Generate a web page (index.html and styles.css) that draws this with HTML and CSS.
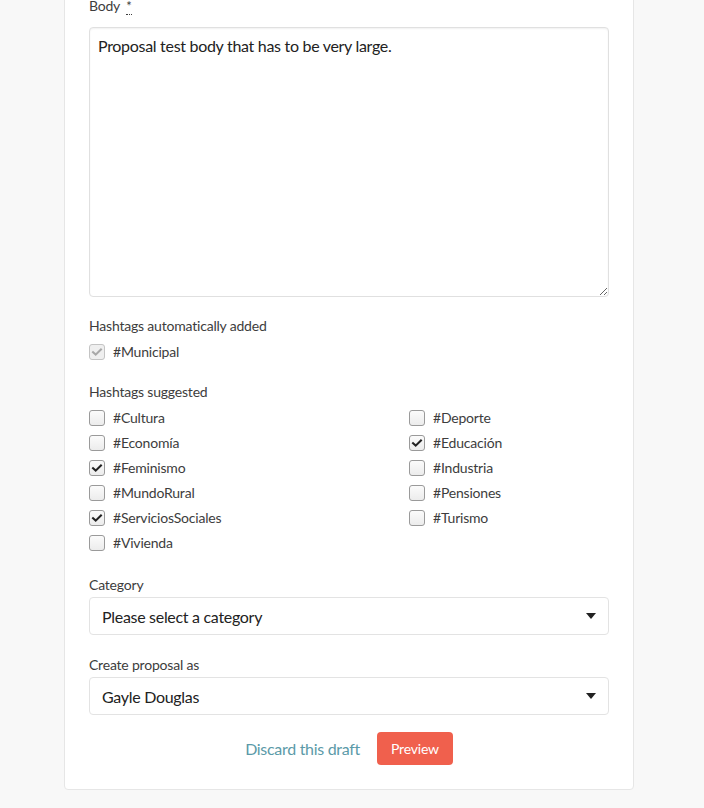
FILE: index.html
```html
<!DOCTYPE html>
<html lang="en">
<head>
<meta charset="utf-8">
<title>New proposal</title>
<link rel="stylesheet" href="styles.css">
</head>
<body>
<div class="page">
  <form class="card">
    <div class="field field-body">
      <label class="label">Body <abbr class="req" title="required">*</abbr></label>
      <textarea class="textarea">Proposal test body that has to be very large.</textarea>
    </div>

    <div class="field field-auto">
      <div class="label">Hashtags automatically added</div>
      <div class="check-list">
        <div class="check-row">
          <span class="box disabled checked"><svg viewBox="0 0 16 16"><path d="M3.5 8.2 L6.5 11 L12.5 5" /></svg></span>
          <span class="check-text">#Municipal</span>
        </div>
      </div>
    </div>

    <div class="field field-suggested">
      <div class="label">Hashtags suggested</div>
      <div class="check-list hashtag-grid">
        <div class="check-row"><span class="box"></span><span class="check-text">#Cultura</span></div>
        <div class="check-row"><span class="box"></span><span class="check-text">#Deporte</span></div>
        <div class="check-row"><span class="box"></span><span class="check-text">#Economía</span></div>
        <div class="check-row"><span class="box checked"><svg viewBox="0 0 16 16"><path d="M3.5 8.2 L6.5 11 L12.5 5" /></svg></span><span class="check-text">#Educación</span></div>
        <div class="check-row"><span class="box checked"><svg viewBox="0 0 16 16"><path d="M3.5 8.2 L6.5 11 L12.5 5" /></svg></span><span class="check-text">#Feminismo</span></div>
        <div class="check-row"><span class="box"></span><span class="check-text">#Industria</span></div>
        <div class="check-row"><span class="box"></span><span class="check-text">#MundoRural</span></div>
        <div class="check-row"><span class="box"></span><span class="check-text">#Pensiones</span></div>
        <div class="check-row"><span class="box checked"><svg viewBox="0 0 16 16"><path d="M3.5 8.2 L6.5 11 L12.5 5" /></svg></span><span class="check-text">#ServiciosSociales</span></div>
        <div class="check-row"><span class="box"></span><span class="check-text">#Turismo</span></div>
        <div class="check-row"><span class="box"></span><span class="check-text">#Vivienda</span></div>
      </div>
    </div>

    <div class="field field-category">
      <div class="label">Category</div>
      <div class="select"><span>Please select a category</span><span class="caret"></span></div>
    </div>

    <div class="field field-author">
      <div class="label">Create proposal as</div>
      <div class="select"><span>Gayle Douglas</span><span class="caret"></span></div>
    </div>

    <div class="actions">
      <a class="discard" href="#">Discard this draft</a>
      <button type="button" class="preview">Preview</button>
    </div>
  </form>
</div>
</body>
</html>
```

FILE: styles.css
```css
html, body {
  margin: 0;
  padding: 0;
  background: #f8f8f8;
  font-family: "Lato", "Open Sans", sans-serif;
  color: #3d3d3d;
}

.page {
  width: 570px;
  margin: 0 0 0 64px;
}

.card {
  box-sizing: border-box;
  width: 570px;
  margin-top: -24px;
  background: #fff;
  border: 1px solid #e6e6e6;
  border-radius: 0 0 4px 4px;
  padding: 20px 24px 24px 24px;
  display: flex;
  flex-direction: column;
}

.field {
  display: flex;
  flex-direction: column;
}

.label {
  display: block;
  font-size: 14px;
  line-height: 18px;
  color: #3d3d3d;
  letter-spacing: -0.2px;
}

.req {
  text-decoration: none;
  border-bottom: 1px dotted #3d3d3d;
  margin-left: 3px;
  font-size: 13px;
}

.textarea {
  box-sizing: border-box;
  display: block;
  margin-top: 12px;
  width: 520px;
  height: 270px;
  border: 1px solid #e0e0e0;
  border-radius: 4px;
  box-shadow: inset 0 1px 2px rgba(0,0,0,0.06);
  padding: 7px 8px;
  font-family: inherit;
  font-size: 16px;
  line-height: 22px;
  color: #222;
  letter-spacing: -0.3px;
  resize: vertical;
  background: #fff;
}

.field-auto {
  margin-top: 20px;
}

.field-suggested {
  margin-top: 19px;
}

.field-category {
  margin-top: 21px;
}

.field-author {
  margin-top: 21px;
}

.check-list {
  margin-top: 4px;
}

.check-row {
  display: flex;
  align-items: center;
  height: 25px;
  gap: 8px;
}

.box {
  box-sizing: border-box;
  width: 16px;
  height: 16px;
  border: 1px solid #9a9a9a;
  border-radius: 3px;
  background: linear-gradient(#fbfbfb, #ececec);
  display: flex;
  align-items: center;
  justify-content: center;
  flex: none;
}

.box svg {
  width: 14px;
  height: 14px;
}

.box path {
  fill: none;
  stroke: #222;
  stroke-width: 2.4;
  stroke-linecap: square;
}

.box.disabled {
  border-color: #c4c4c4;
  background: #efefef;
}

.box.disabled path {
  stroke: #a8a8a8;
}

.check-text {
  font-size: 14px;
  color: #3d3d3d;
  letter-spacing: -0.2px;
}

.hashtag-grid {
  display: grid;
  grid-template-columns: 320px 1fr;
}

.select {
  box-sizing: border-box;
  margin-top: 3px;
  height: 38px;
  border: 1px solid #e3e3e3;
  border-radius: 4px;
  padding: 0 12px;
  display: flex;
  align-items: center;
  justify-content: space-between;
  font-size: 16px;
  color: #222;
  letter-spacing: -0.3px;
  background: #fff;
}

.caret {
  width: 0;
  height: 0;
  border-left: 5px solid transparent;
  border-right: 5px solid transparent;
  border-top: 6px solid #222;
}

.actions {
  margin-top: 17px;
  display: flex;
  justify-content: center;
  align-items: center;
  gap: 17px;
}

.discard {
  color: #5b9aa8;
  font-size: 16px;
  text-decoration: none;
  letter-spacing: -0.3px;
}

.preview {
  background: #f0604d;
  color: #fff;
  border: none;
  border-radius: 4px;
  height: 33px;
  padding: 0 14px;
  font-family: inherit;
  font-size: 14px;
  letter-spacing: -0.2px;
}
```
